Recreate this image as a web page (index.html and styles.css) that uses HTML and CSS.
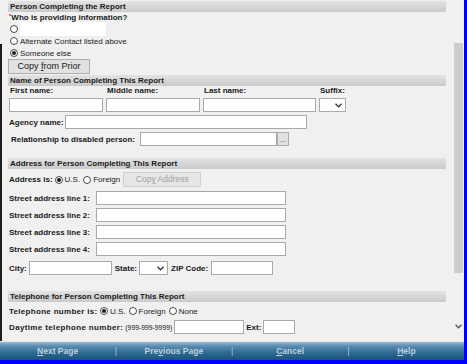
FILE: index.html
```html
<!DOCTYPE html>
<html>
<head>
<meta charset="utf-8">
<link rel="stylesheet" href="styles.css">
</head>
<body>
<div class="window">
  <div class="top">
    <div class="edge"></div>
    <div class="content">
      <div class="sec sec1">Person Completing the Report</div>
      <div class="q"><span class="req">*</span>Who is providing information?</div>
      <div class="opt opt-blank"><span class="radio"></span><span class="blank"></span></div>
      <div class="opt"><span class="radio"></span>Alternate Contact listed above</div>
      <div class="opt"><span class="radio on"></span>Someone else</div>
      <button class="btn copy">Copy <u>f</u>rom Prior</button>

      <div class="sec sec2">Name of Person Completing This Report</div>
      <div class="namegrid">
        <span class="lbl nl">First name:</span>
        <span class="lbl nl">Middle name:</span>
        <span class="lbl nl">Last name:</span>
        <span class="lbl nl">Suffix:</span>
        <input class="in" type="text">
        <input class="in" type="text">
        <input class="in" type="text">
        <span class="sel"><svg width="7" height="5" viewBox="0 0 7 5"><path d="M0.5 0.8 L3.5 3.8 L6.5 0.8" fill="none" stroke="#333" stroke-width="1.3"/></svg></span>
      </div>
      <div class="row agency">
        <span class="lbl w-agency">Agency name:</span>
        <input class="in w242" type="text">
      </div>
      <div class="row rel">
        <span class="lbl w-rel">Relationship to disabled person:</span>
        <input class="in w137" type="text">
        <button class="btn dots">...</button>
      </div>

      <div class="sec sec3">Address for Person Completing This Report</div>
      <div class="row addr-is">
        <span class="lbl">Address is:</span>
        <span class="radio on r-first"></span><span class="rt">U.S.</span>
        <span class="radio"></span><span class="rt">Foreign</span>
        <button class="btn copyaddr" disabled>Cop<u>y</u> Address</button>
      </div>
      <div class="row street s1"><span class="lbl w-street">Street address line 1:</span><input class="in w190" type="text"></div>
      <div class="row street"><span class="lbl w-street">Street address line 2:</span><input class="in w190" type="text"></div>
      <div class="row street"><span class="lbl w-street">Street address line 3:</span><input class="in w190" type="text"></div>
      <div class="row street"><span class="lbl w-street">Street address line 4:</span><input class="in w190" type="text"></div>
      <div class="row city">
        <span class="lbl">City:</span>
        <input class="in w83 gap2" type="text">
        <span class="lbl gap3">State:</span>
        <span class="sel w29 gap2"><svg width="7" height="5" viewBox="0 0 7 5"><path d="M0.5 0.8 L3.5 3.8 L6.5 0.8" fill="none" stroke="#333" stroke-width="1.3"/></svg></span>
        <span class="lbl gap3">ZIP Code:</span>
        <input class="in w62 gap3" type="text">
      </div>

      <div class="sec sec4">Telephone for Person Completing This Report</div>
      <div class="row tel">
        <span class="lbl w-tel">Telephone number is:</span>
        <span class="radio on"></span><span class="rt">U.S.</span>
        <span class="radio"></span><span class="rt">Foreign</span>
        <span class="radio"></span><span class="rt">None</span>
      </div>
      <div class="row day">
        <span class="lbl w-day">Daytime telephone number:</span><span class="fmt">(999-999-9999)</span>
        <input class="in w70 gap2" type="text">
        <span class="lbl gap2">Ext:</span>
        <input class="in w32 gap2" type="text">
      </div>
    </div>
    <div class="scroll">
      <div class="thumb"></div>
      <svg class="down" width="7" height="5" viewBox="0 0 7 5"><path d="M0.5 0.8 L3.5 3.8 L6.5 0.8" fill="none" stroke="#5a5a5a" stroke-width="1.4"/></svg>
    </div>
    <div class="blue-r"></div>
  </div>
  <div class="bottom">
    <div class="bar">
      <span class="nav"><u>N</u>ext Page</span>
      <span class="sep">|</span>
      <span class="nav">Pre<u>v</u>ious Page</span>
      <span class="sep">|</span>
      <span class="nav"><u>C</u>ancel</span>
      <span class="sep">|</span>
      <span class="nav"><u>H</u>elp</span>
    </div>
    <div class="blue-r"></div>
  </div>
  <div class="blue-b"></div>
</div>
</body>
</html>
```
FILE: styles.css
```css
* { box-sizing: border-box; margin: 0; padding: 0; }
html, body { margin: 0; }
body {
  width: 467px; height: 364px; overflow: hidden;
  background: #f0f0f0;
  font-family: "Liberation Sans", Arial, sans-serif;
  font-size: 8px; color: #1a1a1a;
}
.window { display: flex; flex-direction: column; width: 467px; height: 364px; }
.top { display: flex; height: 341px; }
.edge { width: 2px; background: #1c1c1c; margin-top: 44px; }
.content { flex: 1; padding: 0 6px; }
.scroll { width: 12px; display: flex; flex-direction: column; align-items: flex-start; }
.thumb { width: 9px; height: 230px; margin: 43px 0 0 2px; background: #cdcdcd; }
.down { margin: 51px 0 0 3px; }
.blue-r { width: 3px; background: #0000ff; }
.bottom { display: flex; height: 19px; }
.bar {
  flex: 1; display: flex; align-items: center;
  background: linear-gradient(#9dbbd1 0%, #5d8db1 22%, #2f6c95 58%, #1a5279 100%);
  border-top: 1px solid #e4ebf1;
  font-weight: bold; color: #bfcfdc; font-size: 8.5px;
}
.nav { flex: 1; text-align: center; }
.sep { width: 1px; font-weight: normal; color: #b8c9d7; display: flex; justify-content: center; }
.blue-b { height: 4px; background: #0000ff; }

.sec {
  height: 11px; line-height: 11px; padding-left: 2px;
  background: linear-gradient(#e3e3e3, #cacaca);
  border-radius: 1px; font-weight: bold; color: #1a1a1a;
}
.sec1 { margin-top: 1px; }
.sec2 { margin-top: 1px; }
.sec3 { margin-top: 12px; }
.sec4 { margin-top: 16px; }

.q { height: 10px; line-height: 11px; font-weight: bold; padding-left: 1px; }
.req { color: #d02020; font-size: 6px; vertical-align: top; line-height: 8px; }
.opt { display: flex; align-items: center; height: 12px; padding-left: 2px; }
.opt-blank { height: 13px; }
.radio {
  width: 8px; height: 8px; border-radius: 50%;
  border: 1px solid #4a4a4a; background: #fff;
  display: inline-flex; align-items: center; justify-content: center;
  margin-right: 2px; flex: none;
}
.radio.on::after { content: ""; width: 4px; height: 4px; border-radius: 50%; background: #1a1a1a; }
.blank { width: 86px; height: 14px; background: #fff; }

.btn {
  font-family: inherit; font-size: 8.5px; color: #1a1a1a;
  background: #e1e1e1; border: 1px solid #adadad;
  display: block; text-align: center; white-space: nowrap;
}
.copy { width: 82px; height: 15px; line-height: 13px; font-size: 9px; }
.dots { width: 12px; height: 14px; line-height: 14px; font-size: 7px; color: #555; }
.copyaddr { width: 78px; height: 15px; line-height: 13px; margin-left: 0; color: #a2a2a2; background: #e6e6e6; border-color: #cfcfcf; font-size: 8.5px; }

.lbl { font-weight: bold; white-space: nowrap; }
.namegrid {
  display: grid; grid-template-columns: 94px 94px 113px 27px;
  grid-template-rows: 12px 14px; column-gap: 3px; margin-left: 1px;
}
.nl { align-self: end; line-height: 10px; padding-bottom: 2px; padding-left: 1px; }
.in { height: 14px; background: #fff; border: 1px solid #a9a9a9; outline: none; display: block; font-size: 8px; flex: none; }
.sel { height: 14px; background: #fff; border: 1px solid #a9a9a9; display: flex; align-items: center; justify-content: flex-end; padding-right: 3px; }

.row { display: flex; align-items: center; margin-left: 1px; }
.agency { margin-top: 3px; }
.rel { margin-top: 3px; margin-left: 3px; }
.w-agency { width: 56px; }
.w-rel { width: 129px; }
.w-tel { width: 91px; letter-spacing: 0.3px; }
.w-day { letter-spacing: 0.36px; margin-right: 2px; }
.w242 { width: 242px; }
.w137 { width: 137px; }
.w190 { width: 190px; }
.w83 { width: 83px; }
.w29 { width: 29px; }
.w62 { width: 62px; }
.w70 { width: 70px; }
.w32 { width: 32px; }
.gap2 { margin-left: 2px; }
.gap3 { margin-left: 3px; }

.addr-is { margin-top: 3px; height: 15px; }
.r-first { margin-left: 2px; }
.rt { margin-right: 3px; }
.street { margin-top: 3px; }
.s1 { margin-top: 4px; }
.w-street { width: 87px; }
.city { margin-top: 5px; }
.tel { margin-top: 3px; height: 12px; }
.day { margin-top: 3px; }
.fmt { font-size: 6.8px; white-space: nowrap; }
```
